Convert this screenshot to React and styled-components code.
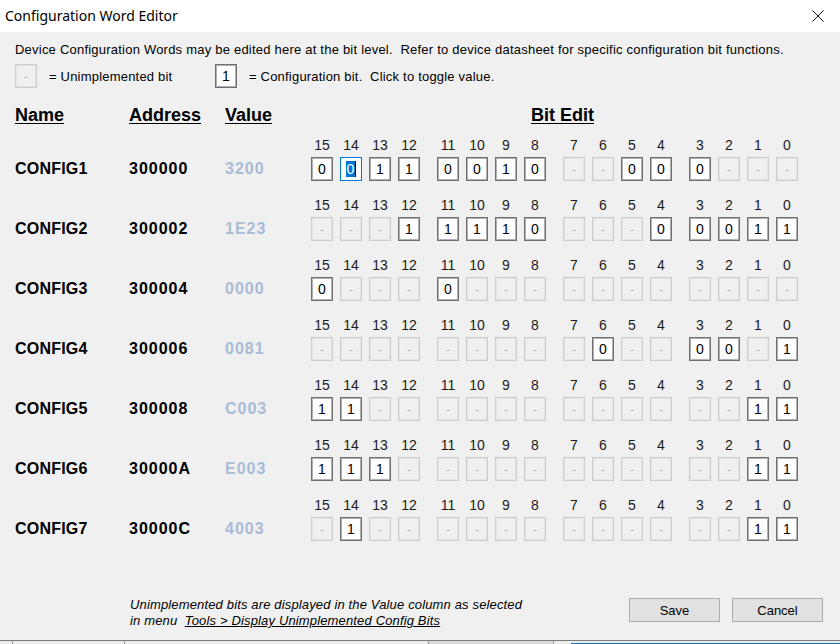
import React from "react";
import styled, { createGlobalStyle } from "styled-components";

const GlobalStyle = createGlobalStyle`
  html, body {
    margin: 0;
    padding: 0;
    background: #f0f0f0;
  }
  body {
    font-family: "Liberation Sans", Arial, sans-serif;
    color: #000;
  }
`;

const configs = [
  { name: "CONFIG1", addr: "300000", value: "3200", bits: "0011 0010 --00 0---", sel: 14 },
  { name: "CONFIG2", addr: "300002", value: "1E23", bits: "---1 1110 ---0 0011" },
  { name: "CONFIG3", addr: "300004", value: "0000", bits: "0--- 0--- ---- ----" },
  { name: "CONFIG4", addr: "300006", value: "0081", bits: "---- ---- -0-- 00-1" },
  { name: "CONFIG5", addr: "300008", value: "C003", bits: "11-- ---- ---- --11" },
  { name: "CONFIG6", addr: "30000A", value: "E003", bits: "111- ---- ---- --11" },
  { name: "CONFIG7", addr: "30000C", value: "4003", bits: "-1-- ---- ---- --11" },
];

const Window = styled.div`
  width: 840px;
  height: 644px;
  display: flex;
  flex-direction: column;
  overflow: hidden;
`;

const Dialog = styled.div`
  height: 640px;
  display: flex;
  flex-direction: column;
  background: #f0f0f0;
`;

const TitleBar = styled.div`
  height: 32px;
  background: #fff;
  display: flex;
  align-items: center;
  justify-content: space-between;
  padding: 0 16px 1px 5px;
  box-sizing: border-box;
`;

const Title = styled.span`
  font-family: "Noto Sans", "Open Sans", sans-serif;
  font-size: 14px;
  color: #000;
`;

const CloseBtn = styled.span`
  display: flex;
  width: 12px;
  height: 12px;
`;

const Body = styled.div`
  flex: 1;
  padding: 10px 0 0 15px;
  display: flex;
  flex-direction: column;
`;

const Intro = styled.div`
  font-size: 13px;
  line-height: 16px;
  letter-spacing: 0.22px;
  white-space: pre;
`;

const Legend = styled.div`
  display: flex;
  align-items: center;
  margin-top: 6px;
  font-size: 13px;
  letter-spacing: 0.2px;
  white-space: pre;
`;

const LegendText = styled.span`
  margin-left: 12px;
  width: ${(p) => p.$w || "auto"};
`;

const Grid = styled.div`
  display: grid;
  grid-template-columns: 114px 96px 86px auto;
  align-items: end;
`;

const HeaderRow = styled(Grid)`
  margin-top: 16px;
  margin-bottom: 11px;
`;

const Head = styled.div`
  font-size: 18px;
  font-weight: bold;
  line-height: 22px;
  text-decoration: underline;
  text-underline-offset: 2px;
  padding-left: ${(p) => p.$pad || 0}px;
`;

const ConfigRow = styled(Grid)`
  margin-bottom: 16px;
`;

const Cell = styled.div`
  font-size: 16px;
  font-weight: bold;
  line-height: 24px;
  letter-spacing: ${(p) => (p.$mono ? "1px" : "0.2px")};
  color: ${(p) => (p.$value ? "#a9bcd6" : "#000")};
`;

const Bits = styled.div`
  display: flex;
  gap: 17px;
`;

const Group = styled.div`
  display: flex;
  gap: 7px;
`;

const BitCol = styled.div`
  display: flex;
  flex-direction: column;
  align-items: center;
  width: 22px;
  gap: 4px;
`;

const BitNum = styled.span`
  font-size: 14px;
  line-height: 16px;
  color: #1a1a1a;
`;

const Box = styled.div`
  width: 22px;
  height: 24px;
  box-sizing: border-box;
  display: flex;
  align-items: center;
  justify-content: center;
  font-size: ${(p) => (p.$off ? "11px" : "14px")};
  color: ${(p) => (p.$off ? "#a3a3a3" : "#000")};
  background: ${(p) => (p.$off ? "#f0f0f0" : "#fff")};
  border: 1px solid ${(p) => (p.$sel ? "#0078d7" : p.$off ? "#cccccc" : "#707070")};
  box-shadow: inset 0 0 0 1px ${(p) => (p.$sel ? "#fff" : p.$off ? "#e4e4e4" : "#b0b0b0")};
`;

const Selected = styled.span`
  background: #0078d7;
  color: #fff;
  line-height: 16px;
  padding: 0 0.5px;
  border-right: 1px solid #000;
`;

const Footer = styled.div`
  display: flex;
  justify-content: space-between;
  align-items: flex-start;
  padding: 0 17px 11px 130px;
`;

const Note = styled.div`
  font-size: 13px;
  font-style: italic;
  line-height: 16px;
  letter-spacing: 0.15px;
  white-space: pre;
`;

const Link = styled.span`
  text-decoration: underline;
`;

const Buttons = styled.div`
  display: flex;
  gap: 12px;
  margin-top: 1px;
`;

const Button = styled.button`
  width: 91px;
  height: 24px;
  font-family: "Liberation Sans", Arial, sans-serif;
  font-size: 13px;
  color: #000;
  background: #e1e1e1;
  border: 1px solid #adadad;
  padding: 0;
`;

const Behind = styled.div`
  flex: 1;
  background: #ececec;
  border-top: 1px solid #7d7d7d;
  display: flex;
`;

const BehindPart = styled.div`
  width: ${(p) => p.$w}px;
  border-left: ${(p) => (p.$line ? "1px solid #9a9a9a" : "none")};
  background: ${(p) => p.$bg || "transparent"};
  margin-top: ${(p) => p.$top || 0}px;
`;

function Bit({ v, sel }) {
  if (v === "-") return <Box $off>-</Box>;
  return <Box $sel={sel}>{sel ? <Selected>{v}</Selected> : v}</Box>;
}

function BitEditor({ bits, sel }) {
  const groups = bits.split(" ");
  return (
    <Bits>
      {groups.map((g, gi) => (
        <Group key={gi}>
          {g.split("").map((v, i) => {
            const n = 15 - (gi * 4 + i);
            return (
              <BitCol key={n}>
                <BitNum>{n}</BitNum>
                <Bit v={v} sel={sel === n} />
              </BitCol>
            );
          })}
        </Group>
      ))}
    </Bits>
  );
}

export default function App() {
  return (
    <>
      <GlobalStyle />
      <Window>
        <Dialog>
          <TitleBar>
            <Title>Configuration Word Editor</Title>
            <CloseBtn>
              <svg width="12" height="12" viewBox="0 0 12 12">
                <path d="M0.5 0.5 L11.5 11.5 M11.5 0.5 L0.5 11.5" stroke="#111" strokeWidth="1" fill="none" />
              </svg>
            </CloseBtn>
          </TitleBar>
          <Body>
            <Intro>
              Device Configuration Words may be edited here at the bit level.  Refer to device datasheet for specific configuration bit functions.
            </Intro>
            <Legend>
              <Box $off>-</Box>
              <LegendText $w="166px">= Unimplemented bit</LegendText>
              <Box>1</Box>
              <LegendText>= Configuration bit.  Click to toggle value.</LegendText>
            </Legend>
            <HeaderRow>
              <Head>Name</Head>
              <Head>Address</Head>
              <Head>Value</Head>
              <Head $pad={220}>Bit Edit</Head>
            </HeaderRow>
            {configs.map((c) => (
              <ConfigRow key={c.name}>
                <Cell>{c.name}</Cell>
                <Cell $mono>{c.addr}</Cell>
                <Cell $mono $value>{c.value}</Cell>
                <BitEditor bits={c.bits} sel={c.sel} />
              </ConfigRow>
            ))}
          </Body>
          <Footer>
            <Note>
              Unimplemented bits are displayed in the Value column as selected
              {"\n"}in menu  <Link>Tools &gt; Display Unimplemented Config Bits</Link>
            </Note>
            <Buttons>
              <Button>Save</Button>
              <Button>Cancel</Button>
            </Buttons>
          </Footer>
        </Dialog>
        <Behind>
          <BehindPart $w={12} />
          <BehindPart $w={112} $line />
          <BehindPart $w={304} $line />
          <BehindPart $w={125} $line $bg="#dcdcdc" />
          <BehindPart $w={17} $line />
          <BehindPart $w={270} $bg="#1f6fb8" $top={2} />
        </Behind>
      </Window>
    </>
  );
}
